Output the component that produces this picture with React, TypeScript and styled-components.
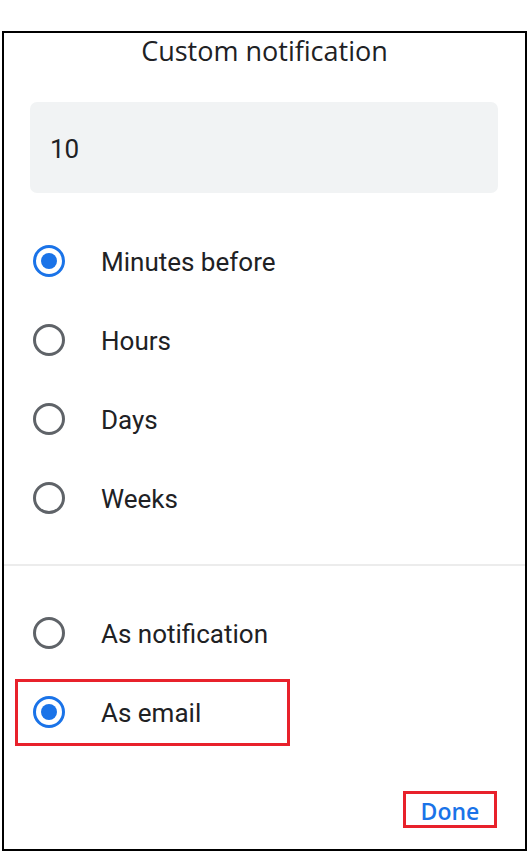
import React from 'react';
import styled, { createGlobalStyle } from 'styled-components';

const GlobalStyle = createGlobalStyle`
  html, body {
    margin: 0;
    padding: 0;
    background: #ffffff;
  }
  * {
    box-sizing: border-box;
  }
`;

const Page = styled.div`
  width: 529px;
  height: 852px;
  padding: 31px 2px 1px 2px;
  background: #ffffff;
`;

const Dialog = styled.div`
  height: 820px;
  border: 2px solid #000000;
  display: flex;
  flex-direction: column;
  background: #ffffff;
`;

const Title = styled.h2`
  margin: 0;
  padding-top: 3px;
  height: 32px;
  line-height: 30px;
  text-align: center;
  font-family: 'Open Sans', Roboto, sans-serif;
  font-weight: 500;
  font-size: 27px;
  color: #202124;
`;

const ValueField = styled.div`
  margin: 37px 27px 0 26px;
  height: 91px;
  border-radius: 7px;
  background: #f1f3f4;
  display: flex;
  align-items: center;
  padding: 3px 0 0 20px;
  font-family: Roboto, 'Noto Sans', sans-serif;
  font-size: 26px;
  color: #202124;
`;

const OptionGroup = styled.div<{ $top: number }>`
  display: flex;
  flex-direction: column;
  padding-top: ${(p) => p.$top}px;
`;

const Divider = styled.div`
  height: 2px;
  margin-top: 26px;
  background: #ececec;
`;

const Row = styled.div<{ $highlight?: boolean }>`
  display: flex;
  align-items: center;
  gap: 36px;
  height: ${(p) => (p.$highlight ? 67 : 79)}px;
  padding-left: ${(p) => (p.$highlight ? 15 : 29)}px;
  font-family: Roboto, 'Noto Sans', sans-serif;
  font-size: 26px;
  color: #202124;
  ${(p) =>
    p.$highlight &&
    `
    width: 275px;
    margin: 6px 0 6px 11px;
    border: 3px solid #e8212b;
  `}
`;

const Label = styled.span`
  padding-top: 2px;
`;

const Radio = styled.span<{ $checked?: boolean }>`
  flex: 0 0 auto;
  width: 32px;
  height: 32px;
  border-radius: 50%;
  border: 3px solid ${(p) => (p.$checked ? '#1a73e8' : '#5f6368')};
  display: flex;
  align-items: center;
  justify-content: center;

  &::after {
    content: '';
    width: 16px;
    height: 16px;
    border-radius: 50%;
    background: ${(p) => (p.$checked ? '#1a73e8' : 'transparent')};
  }
`;

const Footer = styled.div`
  display: flex;
  justify-content: flex-end;
  padding: 39.5px 28px 0 0;
`;

const DoneButton = styled.button`
  width: 94px;
  height: 37px;
  border: 3px solid #e8212b;
  background: transparent;
  padding: 2px 0 0;
  font-family: 'Open Sans', Roboto, sans-serif;
  font-weight: 600;
  font-size: 23px;
  color: #1a73e8;
  display: flex;
  align-items: center;
  justify-content: center;
  cursor: pointer;
`;

const units = ['Minutes before', 'Hours', 'Days', 'Weeks'];

export default function App() {
  return (
    <>
      <GlobalStyle />
      <Page>
        <Dialog>
          <Title>Custom notification</Title>
          <ValueField>10</ValueField>

          <OptionGroup $top={28.5}>
            {units.map((u, i) => (
              <Row key={u}>
                <Radio $checked={i === 0} />
                <Label>{u}</Label>
              </Row>
            ))}
          </OptionGroup>

          <Divider />

          <OptionGroup $top={28}>
            <Row>
              <Radio />
              <Label>As notification</Label>
            </Row>
            <Row $highlight>
              <Radio $checked />
              <Label>As email</Label>
            </Row>
          </OptionGroup>

          <Footer>
            <DoneButton>Done</DoneButton>
          </Footer>
        </Dialog>
      </Page>
    </>
  );
}
